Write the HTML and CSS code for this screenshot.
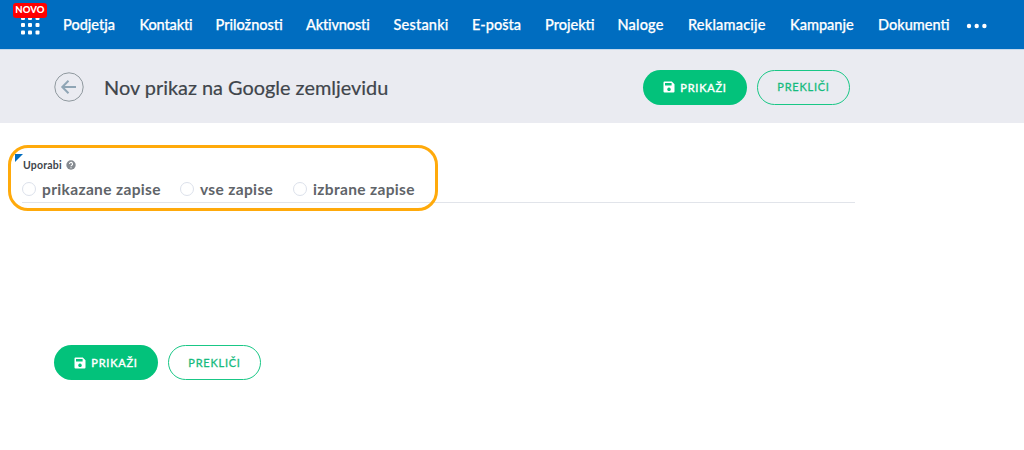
FILE: index.html
```html
<!DOCTYPE html>
<html lang="sl">
<head>
<meta charset="utf-8">
<title>Nov prikaz na Google zemljevidu</title>
<link rel="stylesheet" href="styles.css">
</head>
<body>
<svg class="defs" width="0" height="0" aria-hidden="true">
  <symbol id="save" viewBox="0 0 12 12"><path fill="currentColor" fill-rule="evenodd" d="M1.500 .5h7.300l2.700 2.700v7.300a1 1 0 0 1-1 1h-9a1 1 0 0 1-1-1v-9a1 1 0 0 1 1-1zM2 2v2.600h6.600V2zM6 6.500a1.800 1.800 0 1 0 .01 0z"/></symbol>
</svg>
<nav class="navbar">
  <div class="launcher">
    <svg class="dots" viewBox="0 0 20 20" fill="#fff"><rect width="4" height="4" x="1" y="1" rx="1"/><rect width="4" height="4" x="8" y="1" rx="1"/><rect width="4" height="4" x="15.500" y="1" rx="1"/><rect width="4" height="4" x="1" y="8" rx="1"/><rect width="4" height="4" x="8" y="8" rx="1"/><rect width="4" height="4" x="15.500" y="8" rx="1"/><rect width="4" height="4" x="1" y="15.500" rx="1"/><rect width="4" height="4" x="8" y="15.500" rx="1"/><rect width="4" height="4" x="15.500" y="15.500" rx="1"/></svg>
    <span class="badge">NOVO</span>
  </div>
  <div class="menu">
    <a>Podjetja</a><a class="tight">Kontakti</a><a>Priložnosti</a><a class="tight">Aktivnosti</a><a class="wide">Sestanki</a><a>E-pošta</a><a>Projekti</a><a class="wide">Naloge</a><a class="wide">Reklamacije</a><a>Kampanje</a><a>Dokumenti</a>
  </div>
  <svg class="more" viewBox="0 0 22 6" fill="#fff"><circle cx="3" cy="3" r="2.200"/><circle cx="10.700" cy="3" r="2.200"/><circle cx="18.400" cy="3" r="2.200"/></svg>
</nav>
<header class="page-head">
  <svg class="back" viewBox="0 0 30 30" fill="none"><circle cx="15" cy="15" r="14.200" stroke="#8f989e"/><path d="M22 15H8.500M14.500 8.800l-6.200 6.200 6.200 6.200" stroke="#8fa5b5" stroke-width="2"/></svg>
  <h1>Nov prikaz na Google zemljevidu</h1>
  <div class="actions">
    <button class="btn primary"><svg><use href="#save"/></svg><span>PRIKAŽI</span></button>
    <button class="btn outline"><span>PREKLIČI</span></button>
  </div>
</header>
<main>
  <section class="field">
    <div class="label"><span>Uporabi</span><svg viewBox="0 0 10 10"><circle cx="5" cy="5" r="4.700" fill="#858a90"/><path d="M3.500 4a1.500 1.500 0 1 1 2.300 1.200Q5 5.600 5 6.300M5 7.200v1" fill="none" stroke="#fff" stroke-width="1.100"/></svg></div>
    <div class="options">
      <label><i></i><span class="o1">prikazane zapise</span></label>
      <label><i></i><span class="o2">vse zapise</span></label>
      <label><i></i><span class="o3">izbrane zapise</span></label>
    </div>
    <div class="corner"></div>
    <div class="highlight"></div>
  </section>
  <div class="actions footer">
    <button class="btn primary"><svg><use href="#save"/></svg><span>PRIKAŽI</span></button>
    <button class="btn outline"><span>PREKLIČI</span></button>
  </div>
</main>
</body>
</html>
```
FILE: styles.css
```css
* { box-sizing: border-box; }
body { margin: 0; width: 1024px; height: 450px; overflow: hidden; background: #fff; font-family: Lato, "Open Sans", sans-serif; color: #40454b; }
.defs { position: absolute; }
.navbar { height: 49px; background: #006dc0; display: flex; align-items: center; }
.launcher { position: relative; width: 63px; height: 49px; padding: 15px 0 0 20px; }
.dots { width: 20px; height: 20px; display: block; }
.badge { position: absolute; left: 13px; top: 3px; width: 34px; height: 15px; border-radius: 3px; background: #f00; color: #fff; font: 900 9.500px/14px Lato, sans-serif; text-align: center; letter-spacing: .1px; }
.menu { display: grid; grid-template-columns: 76.500px 76px 90.500px 87.500px 78.500px 73px 72.500px 70.500px 102px 88px 90px; padding-top: 1px; color: #fff; font-size: 14.500px; font-weight: 500; line-height: 20px; -webkit-text-stroke: .25px #fff; }
.menu a { white-space: nowrap; }
.menu .tight { letter-spacing: -.15px; }
.menu .wide { letter-spacing: .2px; }
.more { width: 22px; height: 6px; margin: 2px 0 0 -2px; }
.page-head { height: 74px; background: #eaebf1; border-top: 1px solid #c4d9ed; display: flex; align-items: center; padding: 1px 174px 0 54px; }
.back { width: 30px; height: 30px; }
h1 { margin: 0 0 0 20px; font-size: 19.900px; font-weight: 400; line-height: 28px; white-space: nowrap; -webkit-text-stroke: .2px #40454b; }
.actions { display: flex; gap: 10px; margin-left: auto; }
.btn { height: 35px; border-radius: 18px; display: flex; align-items: center; justify-content: center; font: 400 11px/16px Lato, sans-serif; letter-spacing: .75px; padding: 0; }
.primary { width: 104px; border: 0; background: #03c27b; color: #fff; gap: 5px; -webkit-text-stroke: .4px #fff; }
.primary span { padding-top: 1px; }
.primary svg { width: 12px; height: 12px; }
.outline { width: 93px; border: 1px solid #19c786; background: transparent; color: #16bb7e; -webkit-text-stroke: .3px #16bb7e; }
.field { position: relative; width: 833px; height: 80px; margin-left: 22px; padding-top: 35px; border-bottom: 1px solid #e1e4ea; }
.label { display: flex; align-items: center; gap: 4px; height: 14px; font-size: 10.500px; font-weight: 700; letter-spacing: .2px; padding-left: 1px; }
.label svg { width: 10px; height: 10px; }
.options { display: flex; align-items: center; margin-top: 7px; height: 20px; font-size: 15.500px; font-weight: 700; letter-spacing: .35px; color: #606469; }
label { display: flex; align-items: center; white-space: nowrap; }
label i { width: 14px; height: 14px; border: 1px solid #dce1eb; border-radius: 50%; margin-right: 6px; }
.o1 { width: 138px; }
.o2 { width: 93px; }
.corner { position: absolute; left: -7px; top: 31px; width: 8px; height: 8px; background: #006dc0; clip-path: polygon(0 0, 100% 0, 0 100%); }
.highlight { position: absolute; left: -14px; top: 22px; width: 430px; height: 66px; border: 3px solid #ffaa0b; border-radius: 20px; }
.footer { margin: 142px 0 0 54px; }
```
